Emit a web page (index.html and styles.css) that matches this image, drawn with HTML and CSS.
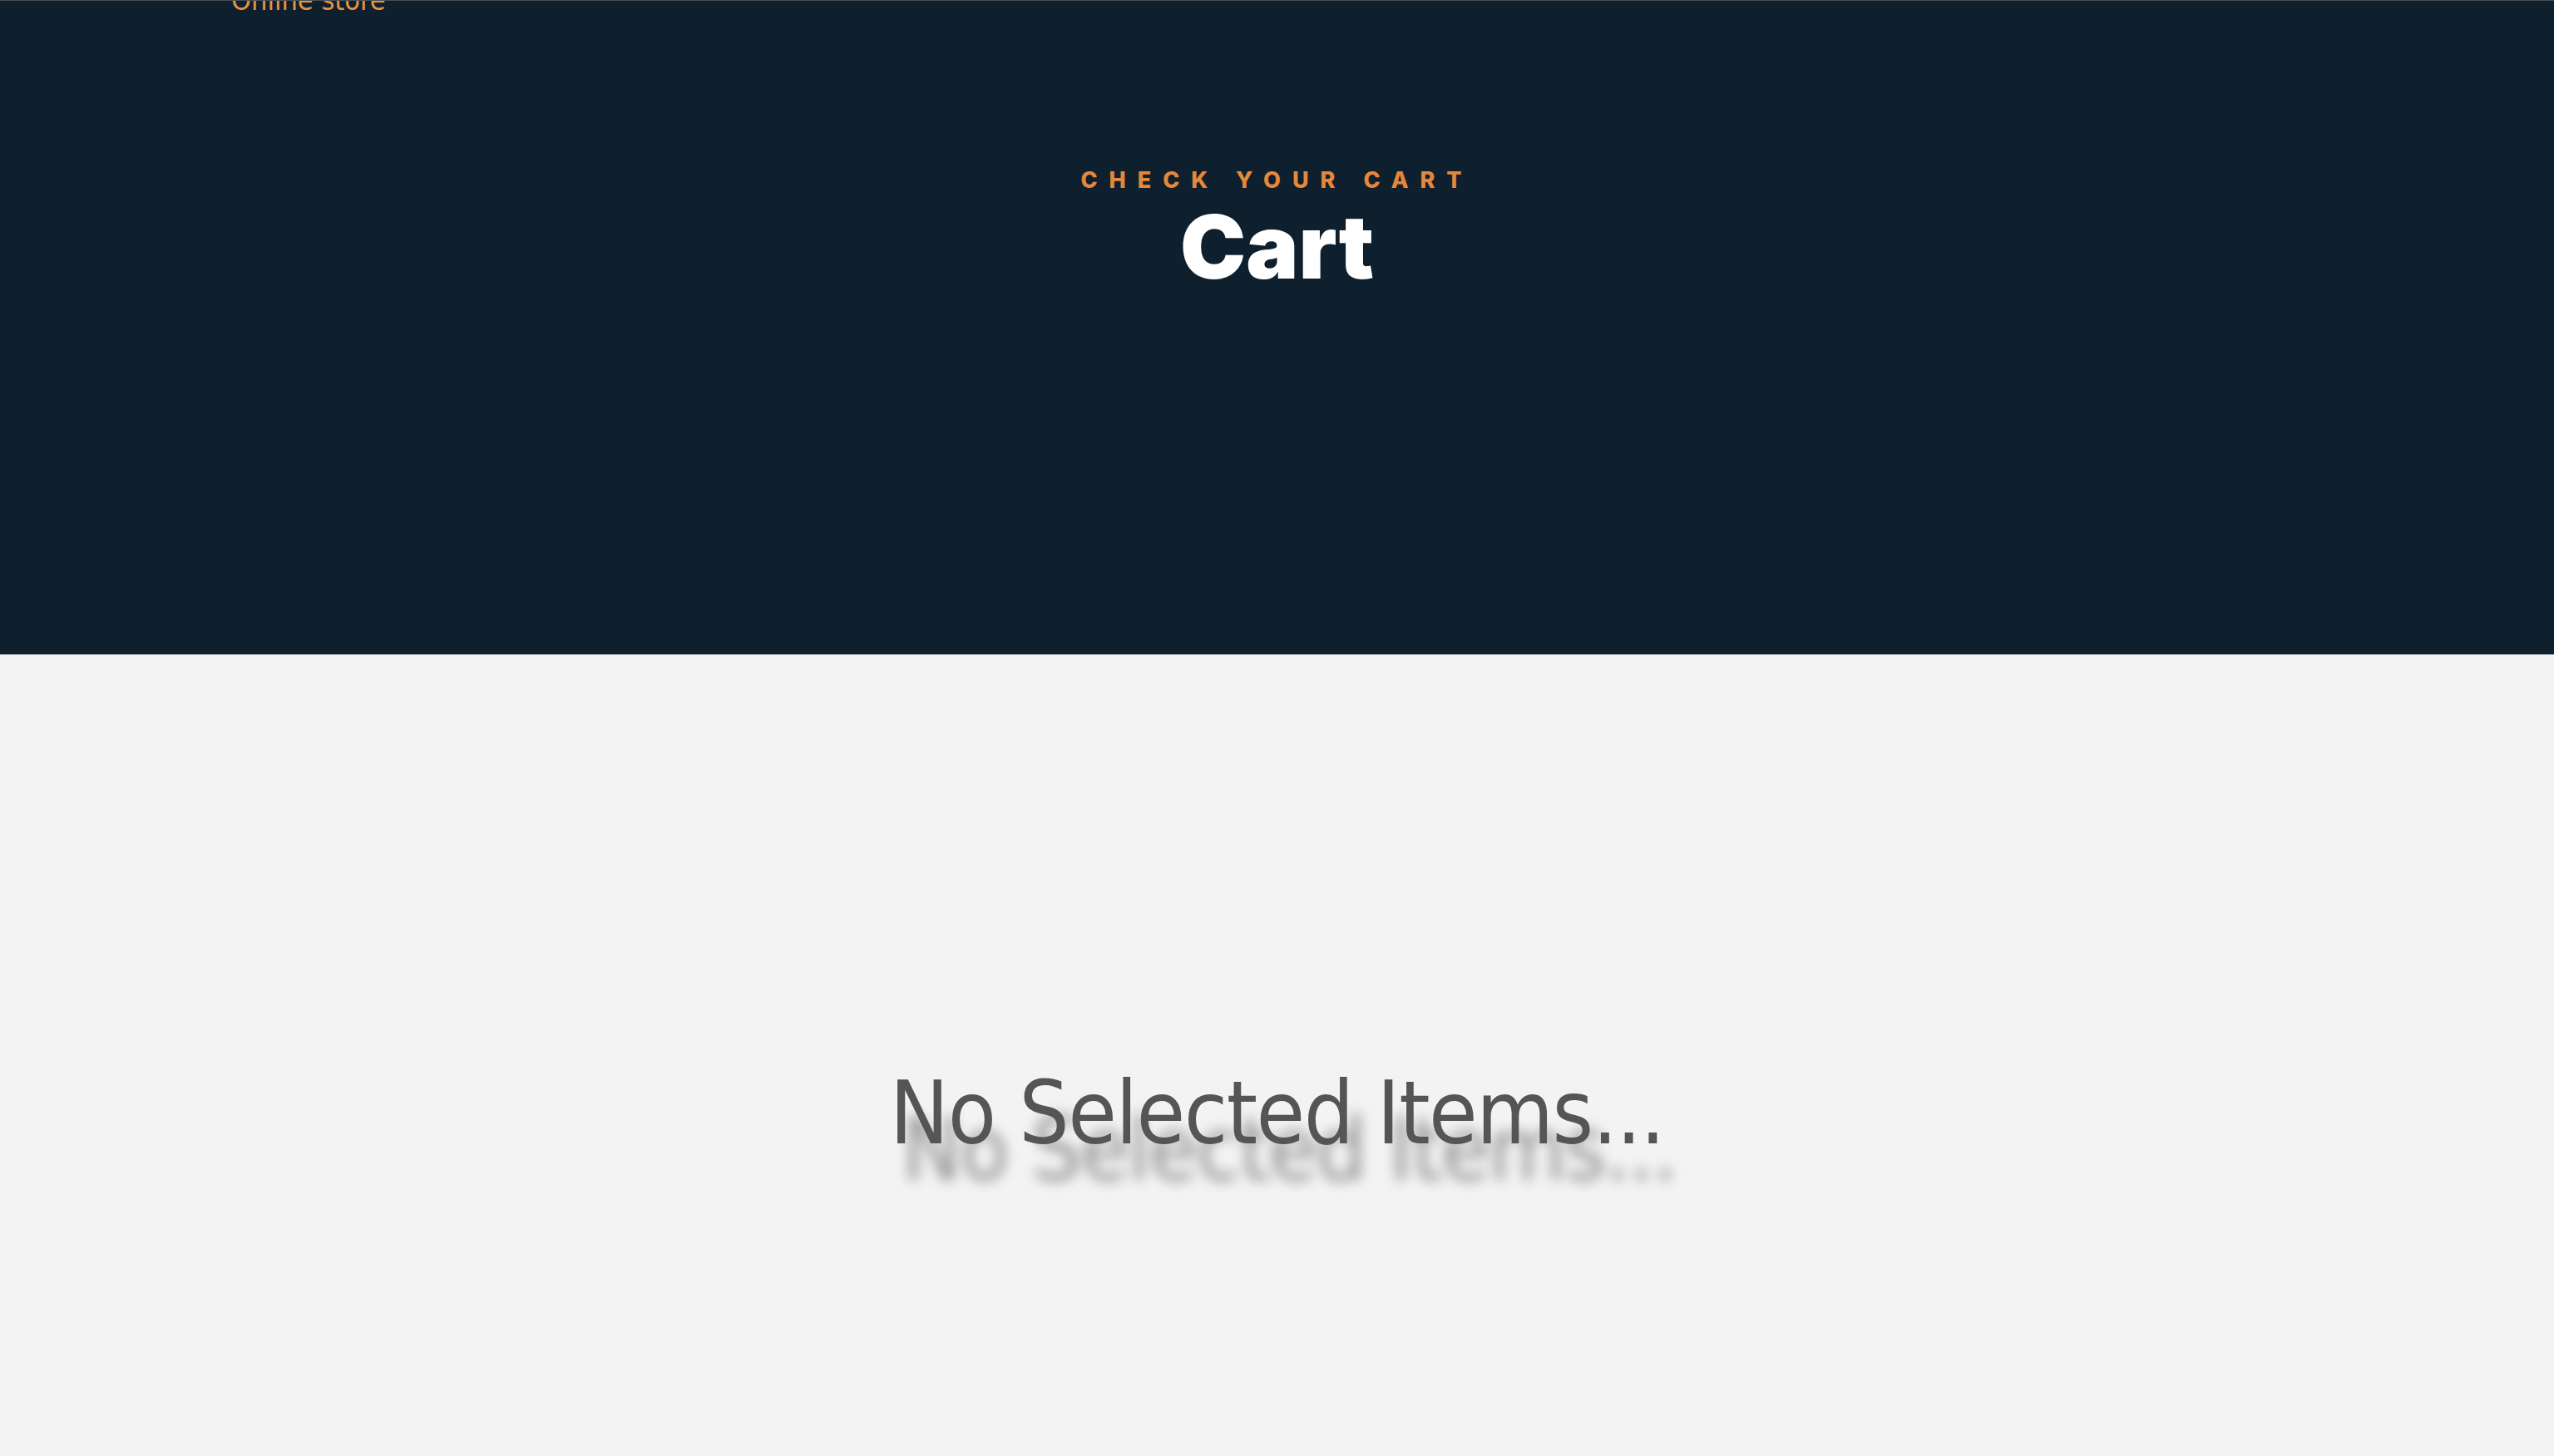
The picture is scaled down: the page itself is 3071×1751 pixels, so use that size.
FILE: index.html
```html
<!DOCTYPE html>
<html lang="en">
<head>
<meta charset="utf-8">
<title>Cart</title>
<link rel="stylesheet" href="styles.css">
</head>
<body>
<header class="hero">
  <nav class="nav">
    <span class="brand">Online store</span>
  </nav>
  <div class="hero-titles">
    <p class="eyebrow">Check your cart</p>
    <h1 class="title">Cart</h1>
  </div>
</header>
<main class="cart">
  <p class="empty">No Selected Items...</p>
</main>
</body>
</html>
```

FILE: styles.css
```css
html, body {
  margin: 0;
  padding: 0;
}
body {
  background: #f3f3f3;
  font-family: "Open Sans", "Noto Sans", sans-serif;
}
.hero {
  box-sizing: border-box;
  height: 787px;
  background: #0e202d;
  border-top: 1px solid #4b4f52;
  overflow: hidden;
  display: flex;
  flex-direction: column;
}
.nav {
  display: flex;
  padding-left: 278px;
  height: 0;
}
.brand {
  display: block;
  margin-top: -23px;
  font-family: "DejaVu Sans Condensed", "DejaVu Sans", sans-serif;
  font-stretch: condensed;
  font-size: 34px;
  line-height: 44px;
  color: #e8943a;
}
.hero-titles {
  display: flex;
  flex-direction: column;
  align-items: center;
  padding-top: 196px;
}
.eyebrow {
  margin: 0;
  font-family: "Inter", "Liberation Sans", sans-serif;
  font-weight: 800;
  font-size: 27px;
  line-height: 40px;
  letter-spacing: 14px;
  text-transform: uppercase;
  color: #e6873a;
}
.title {
  margin: 4px 0 0;
  font-family: "Inter", "Liberation Sans", sans-serif;
  font-weight: 900;
  font-size: 106px;
  line-height: 112px;
  letter-spacing: 0;
  color: #ffffff;
}
.cart {
  height: 964px;
  display: flex;
  justify-content: center;
  box-sizing: border-box;
  padding-top: 482px;
}
.empty {
  margin: 0;
  font-family: "DejaVu Sans Condensed", "DejaVu Sans", sans-serif;
  font-stretch: condensed;
  font-size: 106px;
  line-height: 140px;
  letter-spacing: -1.5px;
  color: #555555;
  text-shadow: 15px 44px 16px rgba(0, 0, 0, 0.4);
}
```
